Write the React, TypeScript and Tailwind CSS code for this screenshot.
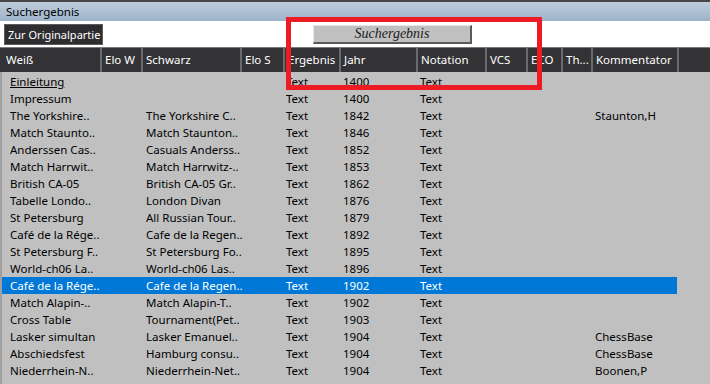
import React from "react";

type Row = {
  weiss: string;
  schwarz?: string;
  jahr: string;
  komm?: string;
  underline?: boolean;
  selected?: boolean;
};

const rows: Row[] = [
  { weiss: "Einleitung", jahr: "1400", underline: true },
  { weiss: "Impressum", jahr: "1400" },
  { weiss: "The Yorkshire..", schwarz: "The Yorkshire C..", jahr: "1842", komm: "Staunton,H" },
  { weiss: "Match Staunto..", schwarz: "Match Staunton..", jahr: "1846" },
  { weiss: "Anderssen Cas..", schwarz: "Casuals Anderss..", jahr: "1852" },
  { weiss: "Match Harrwit..", schwarz: "Match Harrwitz-..", jahr: "1853" },
  { weiss: "British CA-05", schwarz: "British CA-05 Gr..", jahr: "1862" },
  { weiss: "Tabelle Londo..", schwarz: "London Divan", jahr: "1876" },
  { weiss: "St Petersburg", schwarz: "All Russian Tour..", jahr: "1879" },
  { weiss: "Café de la Rége..", schwarz: "Cafe de la Regen..", jahr: "1892" },
  { weiss: "St Petersburg F..", schwarz: "St Petersburg Fo..", jahr: "1895" },
  { weiss: "World-ch06 La..", schwarz: "World-ch06 Las..", jahr: "1896" },
  { weiss: "Café de la Rége..", schwarz: "Cafe de la Regen..", jahr: "1902", selected: true },
  { weiss: "Match Alapin-..", schwarz: "Match Alapin-T..", jahr: "1902" },
  { weiss: "Cross Table", schwarz: "Tournament(Pet..", jahr: "1903" },
  { weiss: "Lasker simultan", schwarz: "Lasker Emanuel..", jahr: "1904", komm: "ChessBase" },
  { weiss: "Abschiedsfest", schwarz: "Hamburg consu..", jahr: "1904", komm: "ChessBase" },
  { weiss: "Niederrhein-N..", schwarz: "Niederrhein-Net..", jahr: "1904", komm: "Boonen,P" },
  { weiss: "Café de la Rége..", schwarz: "Cafe de la Regen..", jahr: "1905" },
];

const headers = ["Weiß", "Elo W", "Schwarz", "Elo S", "Ergebnis", "Jahr", "Notation", "VCS", "ECO", "Th...", "Kommentator"];

export default function App() {
  return (
    <div
      className="relative w-[710px] h-[384px] overflow-hidden flex flex-col bg-[#c0c0c0] text-[11.5px]"
      style={{ fontFamily: '"Noto Sans", "Open Sans", sans-serif' }}
    >
      {/* Title bar */}
      <div className="h-[21px] shrink-0 border-t-2 border-[#474747] bg-gradient-to-b from-[#bfcddd] to-[#9db2ca] flex items-center pl-[6px] text-black">
        Suchergebnis
      </div>

      {/* Toolbar */}
      <div className="h-[26px] shrink-0 bg-white flex items-center pl-[4px]">
        <button className="h-[21px] w-[99px] bg-[#2e2e30] border border-[#5c5c5c] text-white text-left pl-[3px] text-[11px] leading-none whitespace-nowrap overflow-hidden">
          Zur Originalpartie
        </button>
        <div
          className="ml-[210px] h-[19px] w-[159px] bg-[#c0c0c0] border-t border-l border-[#e6e6e6] border-b-2 border-r-2 border-b-[#5a5a5a] border-r-[#5a5a5a] flex items-center justify-center text-[14px] italic text-[#1a1a1a]"
          style={{ fontFamily: '"Liberation Serif", serif' }}
        >
          Suchergebnis
        </div>
      </div>

      {/* Header */}
      <div className="h-[25px] shrink-0 border-t border-[#7a7a7a] bg-[#333336] flex text-white">
        <div className="grid grid-cols-[100px_41px_99px_43px_56px_77px_69px_41px_35px_30px_86px] h-full">
          {headers.map((h, i) => (
            <div
              key={h}
              className={`flex items-center whitespace-nowrap overflow-hidden ${i === 0 ? "pl-[6px]" : "pl-[3px] border-l-2 border-[#6b6b6b]"}`}
            >
              {h}
            </div>
          ))}
        </div>
        <div className="flex-1 border-l-2 border-[#6b6b6b]" />
      </div>

      {/* Body */}
      <div className="flex-1 pt-[1px] border-l-2 border-[#a0a0a0]">
        {rows.map((r, i) => (
          <div
            key={i}
            className={`grid grid-cols-[98px_41px_99px_43px_56px_77px_69px_41px_35px_30px_86px] w-[675px] h-[17px] leading-[17px] whitespace-nowrap ${r.selected ? "bg-[#0078d7] text-white" : "text-black"}`}
          >
            <div className={`pl-[8px] ${r.underline ? "underline" : ""}`}>{r.weiss}</div>
            <div />
            <div className="pl-[5px]">{r.schwarz}</div>
            <div />
            <div className="pl-[3px]">Text</div>
            <div className="pl-[4px]">{r.jahr}</div>
            <div className="pl-[4px]">Text</div>
            <div />
            <div />
            <div />
            <div className="pl-[4px]">{r.komm}</div>
          </div>
        ))}
      </div>

      {/* Red annotation frame */}
      <div className="absolute left-[286px] top-[17px] w-[256px] h-[73px] border-[5px] border-[#ed1c24] pointer-events-none" />
    </div>
  );
}
